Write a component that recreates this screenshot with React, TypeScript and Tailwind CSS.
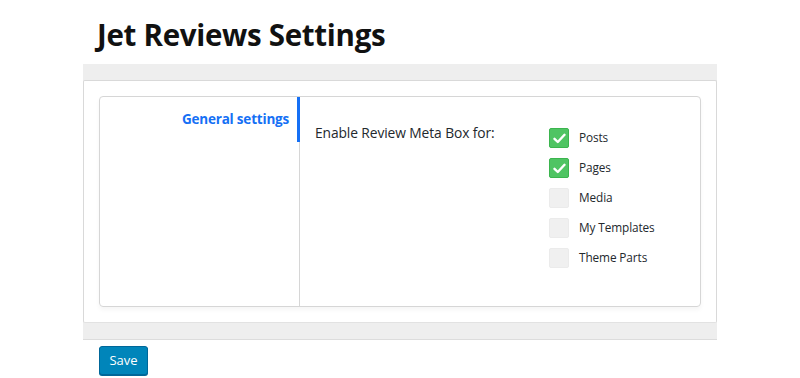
import React from "react";

const items = [
  { label: "Posts", checked: true },
  { label: "Pages", checked: true },
  { label: "Media", checked: false },
  { label: "My Templates", checked: false },
  { label: "Theme Parts", checked: false },
];

function Box({ checked }: { checked: boolean }) {
  if (checked) {
    return (
      <div className="w-[20px] h-[20px] rounded-[2px] bg-[#4fc463] border border-[#3bb54e] flex items-center justify-center">
        <svg width="13" height="11" viewBox="0 0 13 11">
          <path d="M1.5 5.8 L4.8 9 L11.5 1.8" fill="none" stroke="#fff" strokeWidth="2.4" strokeLinecap="round" strokeLinejoin="round" />
        </svg>
      </div>
    );
  }
  return <div className="w-[20px] h-[20px] rounded-[2px] bg-[#f0f0f0] border border-[#ebebeb]" />;
}

export default function App() {
  return (
    <div className="w-[800px] h-[378px] bg-white overflow-hidden" style={{ fontFamily: '"Open Sans", "Noto Sans", sans-serif' }}>
      <h1 className="pl-[97px] pt-[16px] h-[64px] text-[29.5px] leading-[38px] font-bold text-[#111] tracking-[-0.3px]">
        Jet Reviews Settings
      </h1>
      <div className="ml-[83px] w-[634px] bg-[#eeeeee] border-b border-[#dcdcdc] pt-[16px] pb-[16px]">
        <div className="bg-white border border-[#d9d9d9] border-b-[#e2e2e2] rounded-[2px] h-[243px] pl-[15px] pr-[15px] pt-[15px]">
          <div className="h-[211px] border border-[#d6d6d6] rounded-[4px] flex shadow-[0_3px_4px_rgba(0,0,0,0.04)]">
            <div className="w-[200px] border-r border-[#d6d6d6] flex flex-col items-end">
              <div className="relative h-[45px] w-full flex items-center justify-end pr-[10px]">
                <span className="text-[13.5px] font-bold text-[#1570f5] tracking-[-0.2px]">General settings</span>
                <div className="absolute right-[-1px] top-0 w-[3px] h-[45px] bg-[#1570f5]" />
              </div>
            </div>
            <div className="flex-1 flex pl-[15px] pt-[26px]">
              <div className="w-[234px] text-[13.8px] text-[#23282d] leading-[20px] tracking-[-0.1px]">
                Enable Review Meta Box for:
              </div>
              <div className="flex flex-col gap-[10px] pt-[5px]">
                {items.map((it) => (
                  <div key={it.label} className="flex items-center gap-[10px] h-[20px]">
                    <Box checked={it.checked} />
                    <span className="text-[11.8px] text-[#23282d] tracking-[-0.1px]">{it.label}</span>
                  </div>
                ))}
              </div>
            </div>
          </div>
        </div>
      </div>
      <div className="pl-[99px] pt-[6px]">
        <button className="w-[49px] h-[29px] bg-[#0085ba] border border-[#006799] rounded-[3px] text-white text-[13px] shadow-[0_1px_0_#006799]">
          Save
        </button>
      </div>
    </div>
  );
}
